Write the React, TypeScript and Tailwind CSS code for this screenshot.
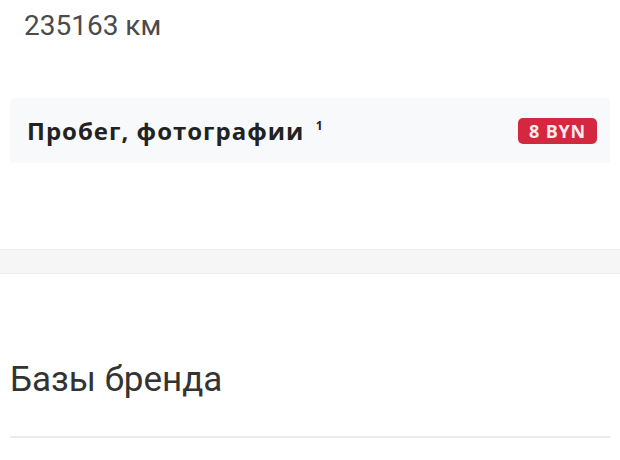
export default function App() {
  return (
    <div className="min-h-screen bg-white font-['Roboto',sans-serif]">
      {/* mileage value */}
      <div className="px-6 pt-[9px] text-[28px] leading-[34px] text-[#4b4b4b]">235163 км</div>

      {/* paid report row */}
      <div className="px-[10px] pt-[55px]">
        <div className="flex h-[65px] items-center justify-between rounded-sm bg-[#f7f9fb] pl-[17px] pr-[13px]">
          <span className="font-['Open_Sans',sans-serif] text-[24px] font-bold leading-[32px] tracking-[1px] text-[#222]">
            Пробег, фотографии <sup className="-top-[10px] ml-[4px] text-[12px]">1</sup>
          </span>
          <span className="rounded-[5px] bg-[#d3283f] px-[11px] py-[3px] font-['Open_Sans',sans-serif] text-[18px] font-bold leading-[20px] tracking-[0.8px] text-[#fbe9eb]">
            8 BYN
          </span>
        </div>
      </div>

      {/* section divider band */}
      <div className="mt-[86px] h-[25px] border-y border-[#ececec] bg-[#f6f6f6]" />

      {/* brand bases */}
      <div className="px-[10px] pt-[86px]">
        <div className="pb-[36px] text-[35px] leading-[40px] text-[#333]">Базы бренда</div>
        <div className="h-[2px] bg-[#ebebeb]" />
      </div>
    </div>
  );
}
